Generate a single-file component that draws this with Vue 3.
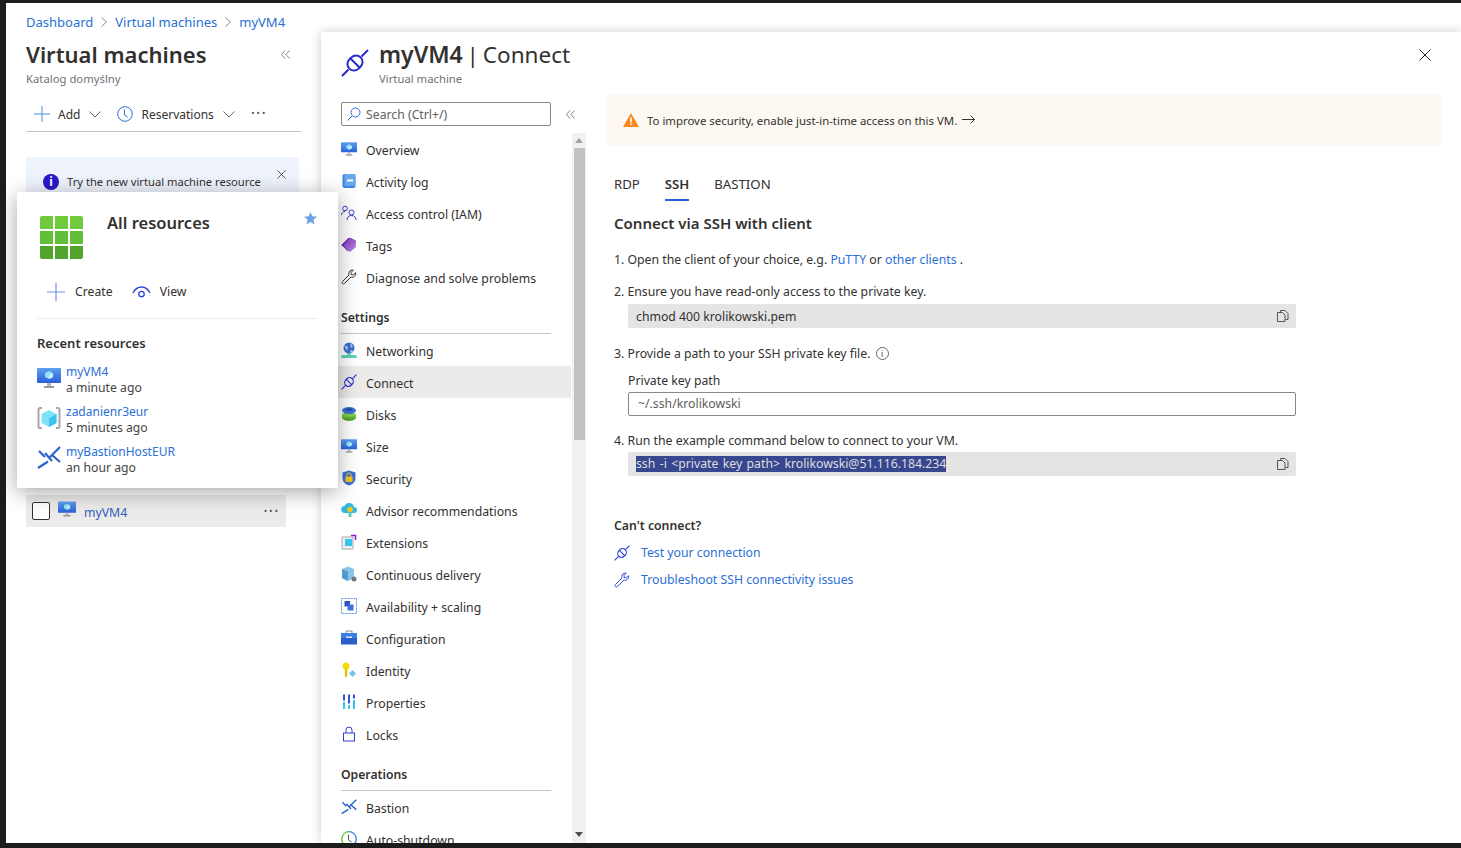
<template>
  <div class="frame">
    <svg class="defs" width="0" height="0" aria-hidden="true">
      <defs>
        <linearGradient id="g-screen" x1="0" y1="0" x2="0" y2="1"><stop offset="0" stop-color="#5ea0ef" /><stop offset="1" stop-color="#2a5fd8" /></linearGradient>
        <linearGradient id="g-purple" x1="0" y1="0" x2="1" y2="1"><stop offset="0" stop-color="#7a2fc0" /><stop offset="1" stop-color="#c08ae0" /></linearGradient>
      </defs>
      <symbol id="i-vm" viewBox="0 0 24 24">
        <rect x="0" y="2" width="24" height="15" rx="1" fill="url(#g-screen)" />
        <path d="M12 5l4 2v4l-4 2-4-2V7z" fill="#8fe3f7" />
        <path d="M12 9l4-2v4l-4 2z" fill="#c8f1fb" />
        <path d="M10 17h4v3h-4z" fill="#b5b5b5" />
        <path d="M7 20h10v2H7z" fill="#9a9a9a" />
      </symbol>
      <symbol id="i-plug" viewBox="0 0 28 28">
        <path d="M1 27l6.500-6.500M20.500 7.500L27 1" fill="none" stroke="currentColor" stroke-width="2" />
        <g transform="rotate(-45 14 14)" fill="none" stroke="currentColor" stroke-width="2">
          <rect x="6" y="7.500" width="16" height="13" rx="6.500" />
          <path d="M14 6.500v15" />
        </g>
      </symbol>
      <symbol id="i-wrench" viewBox="0 0 16 16">
        <path d="M1.500 12.500L8 6c-.6-2 .2-4 2-4.700.8-.3 1.600-.3 2.200-.1L10 3.500l.3 2 2 .4 2.300-2.200c.3 1.600-.2 3-1.400 3.900-1 .7-2.200.8-3.300.4l-6.500 6.500c-.6.600-1.500.500-2-.1-.5-.5-.5-1.500.1-1.900z" fill="none" stroke="currentColor" stroke-width="1" />
      </symbol>
      <symbol id="i-bastion" viewBox="0 0 24 24">
        <path d="M1 22L11 15.500M13 11L23 1M8 7l7 8M15 9l8 7M2 5l6 6" fill="none" stroke="#2f62c9" stroke-width="2.200" />
      </symbol>
      <symbol id="i-log" viewBox="0 0 16 16">
        <rect x="1.500" y="1" width="13" height="14" rx="2" fill="#3e83e0" />
        <rect x="3.500" y="1" width="11" height="12" rx="1" fill="#6aa8ee" />
        <rect x="6" y="6.500" width="6" height="2" fill="#fff" />
      </symbol>
      <symbol id="i-iam" viewBox="0 0 16 16">
        <circle cx="4" cy="3.500" r="2.300" fill="none" stroke="#3a3ad0" />
        <path d="M.5 10c0-2 1.500-3.500 3.500-3.500" fill="none" stroke="#3a3ad0" />
        <circle cx="10.500" cy="7.500" r="2.500" fill="none" stroke="#3a3ad0" />
        <path d="M6 15c0-3 2-4.500 4.500-4.500S15 12 15 15" fill="none" stroke="#3a3ad0" />
      </symbol>
      <symbol id="i-tag" viewBox="0 0 16 16">
        <path d="M.5 8L7 1.500c1-.8 2-.8 3-.4l5 2.400-.2 5.500c0 1-.5 1.500-1 2L9 15z" fill="url(#g-purple)" />
        <path d="M.5 8L7 1.500c.5-.4 1-.6 1.500-.6L2 8.500 7.500 14 7 14.500z" fill="#5c1fa8" />
      </symbol>
      <symbol id="i-net" viewBox="0 0 16 16">
        <circle cx="8" cy="6" r="5.500" fill="#3c6fd0" />
        <path d="M3 3l4 2-1 4zM9 1l3 3-2 2zM9 8l4 1-3 2z" fill="#a9d3f5" />
        <path d="M6 11h4v2H6z" fill="#6ed6c0" />
        <path d="M1 13h14l1 3H0z" fill="#5fd1b3" />
      </symbol>
      <symbol id="i-disk" viewBox="0 0 16 16">
        <ellipse cx="8" cy="11.500" rx="7" ry="3.500" fill="#57a82f" />
        <path d="M1 9h14v2.500H1z" fill="#6ec03d" />
        <ellipse cx="8" cy="8.500" rx="7" ry="2" fill="#7fd04a" />
        <ellipse cx="8" cy="4.500" rx="7" ry="3.500" fill="#3d6fd6" />
        <ellipse cx="8" cy="3.500" rx="3.500" ry="1.300" fill="#1f4bb0" />
      </symbol>
      <symbol id="i-shield" viewBox="0 0 16 16">
        <path d="M8 .5l6.500 2V8c0 4-3 6.500-6.500 7.500C4.500 14.500 1.500 12 1.500 8V2.500z" fill="#3e6fd8" />
        <rect x="4.500" y="6.500" width="7" height="5.500" rx=".5" fill="#f5c518" />
        <path d="M6 6.500V5a2 2 0 014 0v1.500" fill="none" stroke="#f5c518" />
      </symbol>
      <symbol id="i-advisor" viewBox="0 0 16 16">
        <path d="M4 11a3.500 3.500 0 01-.5-7A5 5 0 0113 5a3 3 0 010 6z" fill="#33b8e6" />
        <circle cx="9" cy="7.500" r="2.800" fill="#f2c811" />
        <path d="M7.500 11h3v4h-3z" fill="#5fd1b3" />
      </symbol>
      <symbol id="i-ext" viewBox="0 0 16 16">
        <path d="M1 3h11v12H1z" fill="#f0f0f0" stroke="#a8a8a8" />
        <rect x="4" y="5" width="7" height="7" fill="#35c4ee" />
        <path d="M10 1.500h4.500V6" fill="none" stroke="#8a1fd0" stroke-width="1.500" />
      </symbol>
      <symbol id="i-delivery" viewBox="0 0 16 16">
        <path d="M1 3l6-2.500L13 3v9l-6 3-6-3z" fill="#8cc4e6" />
        <path d="M7 5.500V15l-6-3V3z" fill="#4f9bd0" />
        <circle cx="13" cy="13" r="2.500" fill="#777" />
      </symbol>
      <symbol id="i-scale" viewBox="0 0 16 16">
        <rect x=".5" y=".5" width="15" height="15" fill="none" stroke="#5f8fe0" stroke-dasharray="2 1" />
        <rect x="3.500" y="3" width="5.500" height="5.500" fill="#2f4fc4" />
        <rect x="6.500" y="6.500" width="6" height="6" fill="#3d72e0" />
      </symbol>
      <symbol id="i-config" viewBox="0 0 16 16">
        <path d="M5 3V1h6v2" fill="none" stroke="#8a8a8a" />
        <rect x="0" y="3" width="16" height="5" fill="#3a80e0" />
        <rect x="0" y="8" width="16" height="6.500" fill="#2a5fc9" />
        <rect x="5" y="6.500" width="6" height="1.500" fill="#d4e4f7" />
      </symbol>
      <symbol id="i-identity" viewBox="0 0 16 16">
        <circle cx="5" cy="4" r="3.500" fill="#f5d90a" />
        <path d="M3.800 7h2.500v7L5 15.500 3.800 14z" fill="#e0c000" />
        <path d="M11.500 8l3.500 3.500-3.500 3.500L8 11.500z" fill="#7cc0e6" />
      </symbol>
      <symbol id="i-props" viewBox="0 0 16 16">
        <path d="M2 .5h2v6H2zM7 .5h2v9H7zM12 .5h2v4h-2z" fill="#2f55d0" />
        <path d="M2 8h2v7H2zM7 11h2v4H7zM12 6h2v9h-2z" fill="#36c3ee" />
      </symbol>
      <symbol id="i-lock" viewBox="0 0 16 16">
        <rect x="2.500" y="7" width="11" height="8" fill="none" stroke="#3a3ad0" />
        <path d="M5 7V4a3 3 0 016 0v3" fill="none" stroke="#3a3ad0" />
      </symbol>
      <symbol id="i-clock" viewBox="0 0 16 16">
        <circle cx="8" cy="8" r="7.300" fill="none" stroke="currentColor" />
        <path d="M7.500 3.500V9l3 2" fill="none" stroke="currentColor" />
      </symbol>
      <symbol id="i-autoclock" viewBox="0 0 16 16">
        <path d="M8 .7a7.300 7.300 0 000 14.600" fill="none" stroke="#5fc43a" stroke-width="1.300" />
        <path d="M8 .7a7.300 7.300 0 010 14.600" fill="none" stroke="#3a7fe0" stroke-width="1.300" />
        <path d="M7.500 3.500V9l3 2" fill="none" stroke="#555" />
      </symbol>
      <symbol id="i-copy" viewBox="0 0 12 12">
        <path d="M3.500 2.500V.5H8L11 3.500v6H8.500" fill="none" stroke="currentColor" />
        <path d="M.5 2.500h5l2.500 2.500v6.500H.5z" fill="none" stroke="currentColor" />
      </symbol>
      <symbol id="i-collapse" viewBox="0 0 10 10">
        <path d="M4.500.5L.5 5l4 4.500M9.500.5L5.500 5l4 4.500" fill="none" stroke="currentColor" />
      </symbol>
      <symbol id="i-crumb" viewBox="0 0 6 10">
        <path d="M.5.500L5.500 5 .5 9.500" fill="none" stroke="currentColor" />
      </symbol>
    </svg>

    <div class="page">
      <nav class="crumbs">
        <a>Dashboard</a>
        <svg class="sep"><use href="#i-crumb" /></svg>
        <a>Virtual machines</a>
        <svg class="sep"><use href="#i-crumb" /></svg>
        <a>myVM4</a>
      </nav>

      <div class="blades">
        <aside class="list-blade">
          <div class="list-head">
            <div>
              <h1>Virtual machines</h1>
              <p class="muted">Katalog domyślny</p>
            </div>
            <svg class="collapse"><use href="#i-collapse" /></svg>
          </div>
          <div class="toolbar">
            <svg class="plus" viewBox="0 0 16 16"><path d="M8 0v16M0 8h16" /></svg>
            <span class="tool-label">Add</span>
            <svg class="chev" viewBox="0 0 12 7"><path d="M.5.500L6 6l5.500-5.500" /></svg>
            <svg class="tool-clock"><use href="#i-clock" /></svg>
            <span class="tool-label">Reservations</span>
            <svg class="chev" viewBox="0 0 12 7"><path d="M.5.500L6 6l5.500-5.500" /></svg>
            <span class="dots">···</span>
          </div>
          <div class="banner">
            <span class="info-dot">i</span>
            <span>Try the new virtual machine resource</span>
            <svg class="banner-x" viewBox="0 0 10 10"><path d="M.5.500l9 9M9.500.500l-9 9" /></svg>
          </div>
          <div class="vm-row">
            <span class="check"></span>
            <svg class="vm-icon"><use href="#i-vm" /></svg>
            <a>myVM4</a>
            <span class="row-dots">•••</span>
          </div>
        </aside>

        <main class="connect-blade">
          <header class="connect-head">
            <svg class="head-plug"><use href="#i-plug" /></svg>
            <div class="head-text">
              <h2><b>myVM4</b> | Connect</h2>
              <p class="muted">Virtual machine</p>
            </div>
            <svg class="close-x" viewBox="0 0 12 12"><path d="M.5.500l11 11M11.500.500l-11 11" /></svg>
          </header>

          <div class="connect-body">
            <div class="menu">
              <div class="search-row">
                <div class="search">
                  <svg viewBox="0 0 14 14"><circle cx="8.500" cy="5.500" r="4.500" /><path d="M5.300 8.700L.5 13.500" /></svg>
                  <span>Search (Ctrl+/)</span>
                </div>
                <svg class="collapse"><use href="#i-collapse" /></svg>
              </div>
              <div class="menu-scroll">
                <div class="menu-items">
                  <template v-for="entry in menu" :key="entry.label">
                    <div v-if="entry.group" class="menu-group">{{ entry.label }}</div>
                    <div v-else class="menu-item" :class="{ active: entry.active }">
                      <svg class="menu-ico" :class="entry.cls"><use :href="'#i-' + entry.icon" /></svg>
                      <span>{{ entry.label }}</span>
                    </div>
                  </template>
                </div>
                <div class="scrollbar">
                  <span class="arrow up"></span>
                  <span class="thumb"></span>
                  <span class="arrow down"></span>
                </div>
              </div>
            </div>

            <section class="content">
              <div class="warning">
                <svg class="warn-ico" viewBox="0 0 16 14"><path d="M8 0l8 14H0z" fill="#f7891f" /><path d="M7.200 4.500h1.600v5H7.200zM7.200 10.500h1.600V12H7.200z" fill="#fff" /></svg>
                <span>To improve security, enable just-in-time access on this VM.</span>
                <svg class="arrow-right" viewBox="0 0 13 9"><path d="M0 4.500h12.500M8.500.5l4 4-4 4" /></svg>
              </div>

              <div class="tabs">
                <span>RDP</span>
                <span class="tab-on">SSH</span>
                <span>BASTION</span>
              </div>

              <h3>Connect via SSH with client</h3>

              <p class="step first">1. Open the client of your choice, e.g. <a>PuTTY</a> or <a>other clients</a> .</p>

              <p class="step">2. Ensure you have read-only access to the private key.</p>
              <div class="code">
                <span>chmod 400 krolikowski.pem</span>
                <svg><use href="#i-copy" /></svg>
              </div>

              <p class="step gap">3. Provide a path to your SSH private key file. <span class="hint">i</span></p>
              <label class="key-label">Private key path</label>
              <div class="key-input">~/.ssh/krolikowski</div>

              <p class="step gap4">4. Run the example command below to connect to your VM.</p>
              <div class="code">
                <span class="selected">ssh -i &lt;private key path&gt; krolikowski@51.116.184.234</span>
                <svg><use href="#i-copy" /></svg>
              </div>

              <h4>Can't connect?</h4>
              <div class="help-link"><svg><use href="#i-plug" /></svg><a>Test your connection</a></div>
              <div class="help-link"><svg><use href="#i-wrench" /></svg><a>Troubleshoot SSH connectivity issues</a></div>
            </section>
          </div>
        </main>
      </div>

      <div class="flyout">
        <div class="fly-top">
          <div class="grid-icon"><i v-for="n in 9" :key="n"></i></div>
          <h2>All resources</h2>
          <svg class="star" viewBox="0 0 14 14"><path d="M7 0l2 4.700 5 .4-3.800 3.300 1.200 5L7 10.700l-4.400 2.700 1.200-5L0 5.100l5-.4z" /></svg>
        </div>
        <div class="fly-actions">
          <svg class="plus" viewBox="0 0 16 16"><path d="M8 0v16M0 8h16" /></svg>
          <span>Create</span>
          <svg class="eye" viewBox="0 0 19 12"><path d="M1 7c2-4 5-6 8.500-6S16 3 18 7" /><circle cx="9.500" cy="8" r="2.700" /></svg>
          <span>View</span>
        </div>
        <div class="fly-recent">
          <h4>Recent resources</h4>
          <div v-for="r in recent" :key="r.name" class="recent-row">
            <svg v-if="r.icon !== 'cube'" class="recent-ico"><use :href="'#i-' + r.icon" /></svg>
            <svg v-else class="recent-ico" viewBox="0 0 24 24">
              <path d="M5 2H3Q1.500 2 1.500 3.500v17Q1.500 22 3 22h2" fill="none" stroke="#a8a8a8" stroke-width="2" />
              <path d="M19 2h2q1.500 0 1.500 1.500v17q0 1.500-1.500 1.500h-2" fill="none" stroke="#a8a8a8" stroke-width="2" />
              <path d="M12 4l7.500 4v9L12 21l-7.500-4V8z" fill="#7de3f7" />
              <path d="M12 12.500L19.500 8v9L12 21z" fill="#3cc4ee" />
            </svg>
            <div>
              <a>{{ r.name }}</a>
              <p>{{ r.time }}</p>
            </div>
          </div>
        </div>
      </div>
    </div>
  </div>
</template>

<script setup>
const menu = [
  { label: 'Overview', icon: 'vm' },
  { label: 'Activity log', icon: 'log' },
  { label: 'Access control (IAM)', icon: 'iam' },
  { label: 'Tags', icon: 'tag' },
  { label: 'Diagnose and solve problems', icon: 'wrench', cls: 'dark' },
  { label: 'Settings', group: true },
  { label: 'Networking', icon: 'net' },
  { label: 'Connect', icon: 'plug', active: true, cls: 'indigo' },
  { label: 'Disks', icon: 'disk' },
  { label: 'Size', icon: 'vm' },
  { label: 'Security', icon: 'shield' },
  { label: 'Advisor recommendations', icon: 'advisor' },
  { label: 'Extensions', icon: 'ext' },
  { label: 'Continuous delivery', icon: 'delivery' },
  { label: 'Availability + scaling', icon: 'scale' },
  { label: 'Configuration', icon: 'config' },
  { label: 'Identity', icon: 'identity' },
  { label: 'Properties', icon: 'props' },
  { label: 'Locks', icon: 'lock' },
  { label: 'Operations', group: true },
  { label: 'Bastion', icon: 'bastion' },
  { label: 'Auto-shutdown', icon: 'autoclock' }
]

const recent = [
  { name: 'myVM4', time: 'a minute ago', icon: 'vm' },
  { name: 'zadanienr3eur', time: '5 minutes ago', icon: 'cube' },
  { name: 'myBastionHostEUR', time: 'an hour ago', icon: 'bastion' }
]
</script>

<style>
html, body {
  margin: 0;
  overflow: hidden;
}
</style>

<style scoped>
.frame {
  height: 848px;
  overflow: hidden;
  background: #1c1c1c;
  padding: 3px 0 5px 6px;
  box-sizing: border-box;
  font-family: "Noto Sans", "Open Sans", sans-serif;
  font-size: 12.250px;
  color: #323130;
}
.defs {
  position: absolute;
}
.page {
  position: relative;
  height: 100%;
  background: #fff;
  overflow: hidden;
  display: flex;
  flex-direction: column;
}
a {
  color: #2a6fd6;
}
p, h1, h2, h3, h4 {
  margin: 0;
}
.muted {
  color: #737373;
  font-size: 11.300px;
}

.crumbs {
  height: 29px;
  flex: none;
  padding: 9px 0 0 20px;
  box-sizing: border-box;
  display: flex;
  align-items: center;
  font-size: 13px;
  line-height: 16px;
}
.sep {
  width: 6px;
  height: 10px;
  margin: 0 8px;
  color: #8a8a8a;
}

.blades {
  flex: 1;
  display: flex;
  min-height: 0;
}
.list-blade {
  width: 315px;
  flex: none;
  padding-left: 20px;
  box-sizing: border-box;
}
.list-head {
  display: flex;
  justify-content: space-between;
  width: 275px;
  padding-top: 6px;
}
.list-head h1 {
  font-size: 22px;
  font-weight: 600;
  line-height: 32px;
}
.list-head .muted {
  line-height: 16px;
  margin-top: 1px;
}
.collapse {
  width: 9px;
  height: 9px;
  color: #777;
  margin: 12px 11px 0 0;
  flex: none;
}
.toolbar {
  width: 275px;
  height: 35px;
  margin-top: 10px;
  padding-left: 8px;
  box-sizing: border-box;
  display: flex;
  align-items: center;
  border-bottom: 1px solid #c8c6c4;
}
.plus {
  width: 16px;
  height: 16px;
  stroke: #4f8fe6;
  fill: none;
  flex: none;
}
.tool-label {
  margin-left: 8px;
  font-size: 12px;
}
.chev {
  width: 12px;
  height: 7px;
  margin-left: 9px;
  fill: none;
  stroke: #666;
  flex: none;
}
.tool-clock {
  width: 16px;
  height: 16px;
  margin-left: 16px;
  color: #2a6fd6;
  flex: none;
}
.dots {
  margin-left: 16px;
  font-size: 16px;
  letter-spacing: 1px;
  line-height: 16px;
  margin-top: -2px;
  color: #555;
}
.banner {
  width: 273px;
  height: 60px;
  margin-top: 25px;
  background: #eff3fc;
  border-radius: 2px;
  padding: 17px 0 0 17px;
  box-sizing: border-box;
  display: flex;
  align-items: flex-start;
  gap: 8px;
  position: relative;
  font-size: 11.200px;
  line-height: 16px;
}
.info-dot {
  width: 16px;
  height: 16px;
  border-radius: 50%;
  background: #2a18c8;
  color: #fff;
  font-weight: 700;
  text-align: center;
  font-size: 12px;
  flex: none;
}
.banner-x {
  position: absolute;
  right: 13px;
  top: 13px;
  width: 9px;
  height: 9px;
  fill: none;
  stroke: #444;
}
.vm-row {
  width: 260px;
  height: 32px;
  margin-top: 278px;
  background: #edebe9;
  display: flex;
  align-items: center;
  padding: 0 6px;
  box-sizing: border-box;
}
.check {
  width: 16px;
  height: 16px;
  border: 1px solid #333;
  border-radius: 2px;
  background: #fff;
  flex: none;
}
.vm-icon {
  width: 18px;
  height: 18px;
  margin: -4px 8px 0 8px;
  flex: none;
}
.vm-row a {
  color: #2f5fc0;
  padding-top: 2px;
}
.row-dots {
  margin: -2px 0 0 auto;
  font-size: 8px;
  letter-spacing: 2.300px;
  color: #444;
}

.connect-blade {
  flex: 1;
  min-width: 0;
  background: #fff;
  box-shadow: 0 0 10px rgba(0, 0, 0, 0.2);
  position: relative;
  display: flex;
  flex-direction: column;
}
.connect-head {
  height: 61px;
  flex: none;
  display: flex;
  padding: 15px 0 0 20px;
  box-sizing: border-box;
}
.head-plug {
  width: 28px;
  height: 28px;
  margin-top: 2px;
  color: #2a2ad0;
}
.head-text {
  margin: -5px 0 0 10px;
}
.head-text h2 {
  font-size: 22.500px;
  font-weight: 400;
  line-height: 24px;
  word-spacing: -2px;
}
.head-text b {
  font-size: 23px;
  font-weight: 600;
}
.head-text .muted {
  line-height: 16px;
  margin-top: 4px;
}
.close-x {
  width: 12px;
  height: 12px;
  margin: 2px 30px 0 auto;
  fill: none;
  stroke: #222;
}

.connect-body {
  flex: 1;
  display: flex;
  min-height: 0;
}
.menu {
  width: 265px;
  flex: none;
  display: flex;
  flex-direction: column;
}
.search-row {
  height: 40px;
  flex: none;
  padding: 9px 0 0 20px;
  box-sizing: border-box;
  display: flex;
}
.search {
  width: 210px;
  height: 24px;
  border: 1px solid #8a8886;
  border-radius: 2px;
  box-sizing: border-box;
  display: flex;
  align-items: center;
  gap: 5px;
  padding-left: 5px;
  color: #605e5c;
}
.search svg {
  width: 14px;
  height: 14px;
  fill: none;
  stroke: #2a6fd6;
}
.search-row .collapse {
  margin: 8px 0 0 15px;
}
.menu-scroll {
  flex: 1;
  display: flex;
  min-height: 0;
  overflow: hidden;
}
.menu-items {
  width: 250px;
  flex: none;
}
.menu-item {
  height: 32px;
  display: flex;
  align-items: center;
  padding-left: 20px;
}
.menu-item span {
  padding-top: 2px;
}
.menu-item.active {
  background: #edebe9;
}
.menu-ico {
  width: 16px;
  height: 16px;
  margin-right: 9px;
  flex: none;
  color: #323130;
}
.menu-ico.indigo {
  color: #2a2ad0;
}
.menu-group {
  height: 41px;
  margin: 0 20px;
  padding-top: 16px;
  box-sizing: border-box;
  border-bottom: 1px solid #c8c6c4;
  font-weight: 600;
  font-size: 12.200px;
  line-height: 18px;
}
.scrollbar {
  width: 14px;
  margin-left: 1px;
  flex: none;
  background: #f1f1f1;
  display: flex;
  flex-direction: column;
  align-items: center;
}
.thumb {
  width: 11px;
  height: 292px;
  background: #c1c1c1;
  margin-top: 5px;
}
.arrow {
  width: 0;
  height: 0;
  border-left: 4px solid transparent;
  border-right: 4px solid transparent;
}
.arrow.up {
  border-bottom: 5px solid #a0a0a0;
  margin-top: 5px;
}
.arrow.down {
  border-top: 5px solid #505050;
  margin-top: auto;
  margin-bottom: 6px;
}

.content {
  flex: 1;
  min-width: 0;
  padding: 2px 20px 0 20px;
}
.warning {
  height: 50px;
  background: #fdf8f2;
  border-radius: 2px;
  display: flex;
  align-items: center;
  padding-left: 17px;
  font-size: 11.400px;
}
.warn-ico {
  width: 16px;
  height: 14px;
  margin-right: 8px;
}
.arrow-right {
  width: 13px;
  height: 9px;
  margin: -1px 0 0 5px;
  fill: none;
  stroke: #323130;
}
.tabs {
  display: flex;
  gap: 25px;
  margin: 30px 0 0 8px;
  height: 25px;
  line-height: 18px;
  font-size: 13.200px;
}
.tab-on {
  font-weight: 600;
  border-bottom: 2px solid #2a5fd8;
  height: 24px;
}
.content h3 {
  font-size: 15px;
  font-weight: 600;
  line-height: 20px;
  margin: 13px 0 0 8px;
}
.step {
  margin: 0 0 0 8px;
  line-height: 18px;
  padding-top: 14px;
}
.step.first {
  padding-top: 18px;
}
.step.gap {
  padding-top: 17px;
}
.step.gap4 {
  padding-top: 16px;
  font-size: 12.300px;
}
.code {
  margin: 3px 0 0 22px;
  width: 668px;
  height: 24px;
  background: #e4e4e4;
  border-radius: 2px;
  padding: 0 7px 0 8px;
  box-sizing: border-box;
  display: flex;
  align-items: center;
  justify-content: space-between;
}
.gap4 + .code {
  margin-top: 2px;
}
.code svg {
  width: 12px;
  height: 12px;
  color: #555;
}
.selected {
  background: #37478f;
  color: #dedede;
  line-height: 16px;
  word-spacing: 1.200px;
}
.hint {
  display: inline-block;
  width: 11px;
  height: 11px;
  line-height: 11px;
  border: 1px solid #666;
  border-radius: 50%;
  text-align: center;
  font-size: 8px;
  margin-left: 2px;
  vertical-align: 1px;
}
.key-label {
  display: block;
  margin: 9px 0 0 22px;
  line-height: 18px;
}
.key-input {
  margin: 2px 0 0 22px;
  width: 668px;
  height: 24px;
  border: 1px solid #8a8886;
  border-radius: 2px;
  padding-left: 9px;
  box-sizing: border-box;
  line-height: 22px;
  color: #605e5c;
}
.content h4 {
  font-size: 12.250px;
  font-weight: 600;
  line-height: 18px;
  margin: 41px 0 4px 8px;
}
.help-link {
  display: flex;
  align-items: center;
  gap: 11px;
  margin-left: 8px;
  height: 27px;
}
.help-link svg {
  width: 16px;
  height: 16px;
  color: #2a44d8;
  flex: none;
}

.flyout {
  position: absolute;
  left: 11px;
  top: 189px;
  width: 321px;
  height: 296px;
  background: #fff;
  box-shadow: 0 4px 20px rgba(0, 0, 0, 0.35);
  z-index: 5;
  box-sizing: border-box;
  padding: 0 20px;
}
.fly-top {
  display: flex;
  padding: 24px 0 0 3px;
  height: 83px;
  box-sizing: border-box;
  position: relative;
}
.grid-icon {
  width: 43px;
  height: 43px;
  display: grid;
  grid-template-columns: repeat(3, 1fr);
  grid-template-rows: repeat(3, 1fr);
  gap: 1.500px;
  border-radius: 2px;
  overflow: hidden;
  flex: none;
}
.grid-icon i {
  background: #63bf38;
}
.grid-icon i:nth-child(-n+3) {
  background: #6fcb3c;
}
.grid-icon i:nth-child(n+7) {
  background: #53a32f;
}
.fly-top h2 {
  margin: -5px 0 0 24px;
  font-size: 16.500px;
  font-weight: 600;
  line-height: 24px;
}
.star {
  position: absolute;
  right: 1px;
  top: 20px;
  width: 13px;
  height: 13px;
  fill: #6ea4e8;
}
.fly-actions {
  height: 44px;
  padding: 0 0 10px 10px;
  display: flex;
  align-items: center;
  border-bottom: 1px solid #edebe9;
  box-sizing: border-box;
}
.fly-actions .plus {
  width: 18px;
  height: 18px;
  stroke: #6f8fe6;
  margin-right: 10px;
}
.eye {
  width: 19px;
  height: 12px;
  fill: none;
  stroke: #2a44d8;
  stroke-width: 1.300;
  margin: 0 9px 0 19px;
}
.fly-recent h4 {
  font-size: 13px;
  font-weight: 600;
  line-height: 18px;
  margin: 15px 0 12px;
}
.recent-row {
  display: flex;
  height: 40px;
  line-height: 16px;
}
.recent-row a {
  font-size: 12px;
}
.recent-row p {
  color: #444;
  font-size: 12.200px;
}
.recent-ico {
  width: 24px;
  height: 24px;
  margin: 2px 5px 0 0;
  flex: none;
}
</style>
